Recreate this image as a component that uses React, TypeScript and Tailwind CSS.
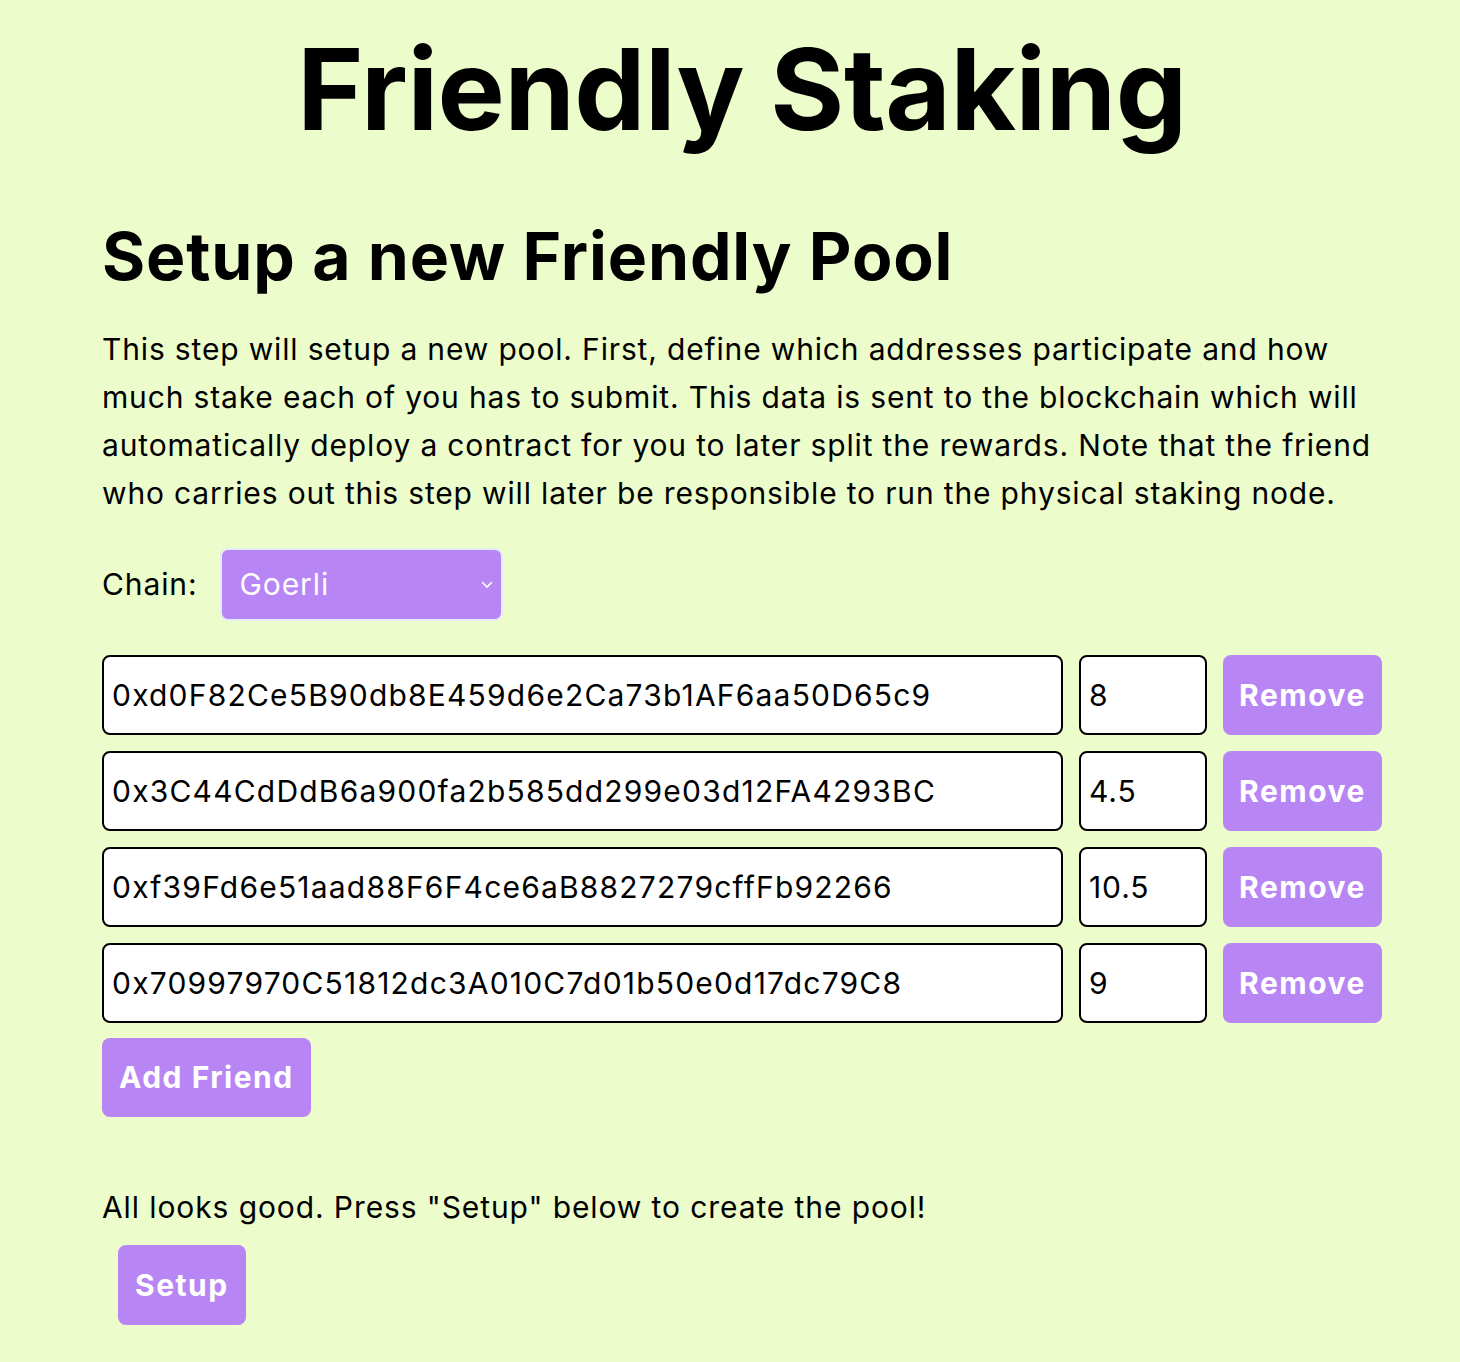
import { useState } from "react";

const friends = [
  { address: "0xd0F82Ce5B90db8E459d6e2Ca73b1AF6aa50D65c9", stake: "8" },
  { address: "0x3C44CdDdB6a900fa2b585dd299e03d12FA4293BC", stake: "4.5" },
  { address: "0xf39Fd6e51aad88F6F4ce6aB8827279cffFb92266", stake: "10.5" },
  { address: "0x70997970C51812dc3A010C7d01b50e0d17dc79C8", stake: "9" },
];

export default function App() {
  const [rows] = useState(friends);

  return (
    <div className="min-h-[1362px] bg-[#ecfccb] text-black font-['Inter',sans-serif]">
      <div className="ml-[102px] w-[1280px] pt-[21px]">
        <h1 className="text-center text-[113px] leading-[136px] font-bold tracking-[-0.004em]">
          Friendly Staking
        </h1>

        <h2 className="mt-[59px] text-[66px] leading-[80px] font-bold tracking-[0.013em]">
          Setup a new Friendly Pool
        </h2>

        <p className="mt-[29px] text-[30px] leading-[48px] tracking-[0.028em]">
          This step will setup a new pool. First, define which addresses participate and how
          much stake each of you has to submit. This data is sent to the blockchain which will
          automatically deploy a contract for you to later split the rewards. Note that the friend
          who carries out this step will later be responsible to run the physical staking node.
        </p>

        <div className="mt-[31px] flex items-center gap-[22px]">
          <label className="text-[30px] tracking-[0.03em]">Chain:</label>
          <div className="relative">
            <select className="h-[73px] w-[283px] appearance-none rounded-lg border-2 border-[#e4ecf4] bg-[#b886f4] pl-[18px] text-[30px] tracking-[0.03em] text-white outline-none">
              <option>Goerli</option>
            </select>
            <svg
              className="pointer-events-none absolute right-[10px] top-[33px]"
              width="12"
              height="8"
              viewBox="0 0 12 8"
              fill="none"
              stroke="white"
              strokeWidth="1.6"
              strokeLinecap="round"
            >
              <path d="M1.5 1.5 L6 6 L10.5 1.5" />
            </svg>
          </div>
        </div>

        <div className="mt-[34px] flex flex-col gap-[16px]">
          {rows.map((r) => (
            <div key={r.address} className="flex gap-[16px]">
              <input
                readOnly
                value={r.address}
                className="h-[80px] w-[961px] rounded-lg border-2 border-black bg-white pl-[8px] text-[30px] tracking-[0.04em] outline-none"
              />
              <input
                readOnly
                value={r.stake}
                className="h-[80px] w-[128px] rounded-lg border-2 border-black bg-white pl-[8px] text-[30px] tracking-[0.03em] outline-none"
              />
              <button className="h-[80px] w-[159px] rounded-lg bg-[#b886f4] text-[30px] font-bold tracking-[0.05em] text-white">
                Remove
              </button>
            </div>
          ))}
        </div>

        <button className="mt-[15px] h-[79px] rounded-lg bg-[#b886f4] px-[17px] text-[30px] font-bold tracking-[0.05em] text-white">
          Add Friend
        </button>

        <p className="mt-[68px] text-[30px] leading-[44px] tracking-[0.03em]">
          All looks good. Press "Setup" below to create the pool!
        </p>

        <button className="ml-[16px] mt-[16px] h-[80px] rounded-lg bg-[#b886f4] px-[17px] text-[30px] font-bold tracking-[0.05em] text-white">
          Setup
        </button>
      </div>
    </div>
  );
}
